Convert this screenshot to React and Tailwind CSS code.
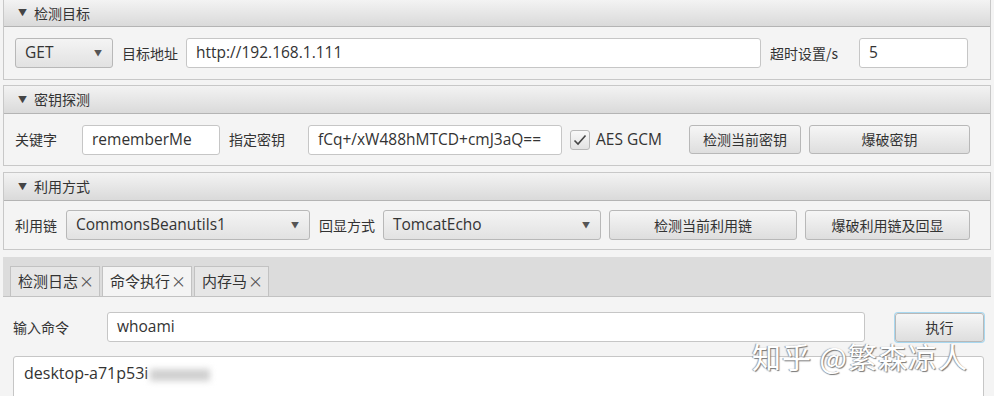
import React from "react";

const latin = "font-['Open_Sans','Noto_Sans_CJK_SC',sans-serif]";
const cjk = "font-['Noto_Sans_CJK_SC','Open_Sans',sans-serif]";

const Header = ({ title, h = "h-[28px]" }) => (
    <div className={`${h} flex items-center border-b border-[#b4b4b4] bg-gradient-to-b from-[#f3f3f3] to-[#dadada] pl-[14px] text-[14px] text-[#333] ${cjk}`}>
        <span className="mr-[7px] text-[9px] text-[#444]">▼</span>
        {title}
    </div>
);

const Label = ({ children, className = "" }) => (
    <span className={`text-[14px] text-[#333] ${cjk} ${className}`}>{children}</span>
);

const Input = ({ value, className = "" }) => (
    <div className={`flex items-center rounded-[3px] border border-[#c6c6c6] bg-white px-[9px] text-[15.5px] text-[#333] ${latin} ${className}`}>
        {value}
    </div>
);

const Combo = ({ value, className = "" }) => (
    <div className={`flex items-center justify-between rounded-[3px] border border-[#b8b8b8] bg-gradient-to-b from-[#f4f4f4] to-[#e2e2e2] pl-[9px] pr-[10px] text-[15.5px] text-[#333] ${latin} ${className}`}>
        <span>{value}</span>
        <span className="text-[8px] text-[#555]">▼</span>
    </div>
);

const Btn = ({ children, className = "" }) => (
    <div className={`flex items-center justify-center rounded-[3px] border border-[#b8b8b8] bg-gradient-to-b from-[#f6f6f6] to-[#dedede] text-[14px] text-[#333] ${cjk} ${className}`}>
        {children}
    </div>
);

const Tab = ({ label, active, w }) => (
    <div className={`flex h-[30px] items-center border border-b-0 border-[#c2c2c2] pl-[7px] text-[15px] text-[#333] ${cjk} ${w} ${active ? "bg-[#f4f4f4]" : "bg-[#e6e6e6]"}`}>
        {label}
        <span className="ml-[1px] text-[15px] text-[#555]">×</span>
    </div>
);

export default function App() {
    return (
        <div className="relative h-[396px] w-[994px] overflow-hidden bg-[#f4f4f4]">
            <div className="flex flex-col px-[3px]">
                {/* 检测目标 */}
                <div className="border-x border-[#c8c8c8]">
                    <Header title="检测目标" h="h-[27px]" />
                    <div className="flex h-[53px] items-center border-b border-[#c8c8c8] pl-[11px]">
                        <Combo value="GET" className="h-[30px] w-[98px]" />
                        <Label className="ml-[9px]">目标地址</Label>
                        <Input value="http://192.168.1.111" className="ml-[8px] h-[30px] w-[575px]" />
                        <Label className="ml-[9px]">超时设置/s</Label>
                        <Input value="5" className="ml-auto mr-[22px] h-[30px] w-[109px]" />
                    </div>
                </div>

                {/* 密钥探测 */}
                <div className="mt-[5px] border-x border-t border-[#c8c8c8]">
                    <Header title="密钥探测" />
                    <div className="flex h-[52px] items-center border-b border-[#c8c8c8] pl-[11px]">
                        <Label>关键字</Label>
                        <Input value="rememberMe" className="ml-[25px] h-[30px] w-[138px]" />
                        <Label className="ml-[9px]">指定密钥</Label>
                        <Input value="fCq+/xW488hMTCD+cmJ3aQ==" className="ml-[23px] h-[30px] w-[254px] whitespace-nowrap" />
                        <div className="ml-[8px] flex h-[20px] w-[20px] items-center justify-center rounded-[3px] border border-[#b8b8b8] bg-gradient-to-b from-[#f8f8f8] to-[#e2e2e2]">
                            <svg width="14" height="12" viewBox="0 0 14 12">
                                <path d="M1.5 6.5 L5 10 L12.5 1.5" fill="none" stroke="#444" strokeWidth="1.6" />
                            </svg>
                        </div>
                        <span className={`ml-[6px] text-[15.5px] text-[#333] ${latin}`}>AES GCM</span>
                        <Btn className="ml-[27px] h-[29px] w-[112px]">检测当前密钥</Btn>
                        <Btn className="ml-[8px] h-[29px] w-[161px]">爆破密钥</Btn>
                    </div>
                </div>

                {/* 利用方式 */}
                <div className="mt-[6px] border-x border-t border-[#c8c8c8]">
                    <Header title="利用方式" />
                    <div className="flex h-[49px] items-center border-b border-[#c8c8c8] pl-[11px]">
                        <Label>利用链</Label>
                        <Combo value="CommonsBeanutils1" className="ml-[9px] h-[30px] w-[244px]" />
                        <Label className="ml-[9px]">回显方式</Label>
                        <Combo value="TomcatEcho" className="ml-[8px] h-[30px] w-[218px]" />
                        <Btn className="ml-[8px] h-[30px] w-[188px]">检测当前利用链</Btn>
                        <Btn className="ml-[8px] h-[30px] w-[165px]">爆破利用链及回显</Btn>
                    </div>
                </div>

                {/* tabs */}
                <div className="mt-[7px] flex h-[40px] items-end gap-[2px] border-b border-[#c2c2c2] bg-[#dcdcdc] pl-[7px]">
                    <Tab label="检测日志" w="w-[90px]" />
                    <Tab label="命令执行" w="w-[90px]" active />
                    <Tab label="内存马" w="w-[75px]" />
                </div>

                <div className="flex items-center pl-[10px] pt-[15px]">
                    <Label>输入命令</Label>
                    <Input value="whoami" className="ml-[38px] h-[30px] w-[758px]" />
                    <Btn className="ml-[30px] h-[29px] w-[89px] border-[#3aa3d8] shadow-[0_0_0_1px_#a8d8f0]">执行</Btn>
                </div>

                <div className={`ml-[10px] mt-[14px] h-[60px] w-[971px] rounded-t-[3px] border border-[#c6c6c6] bg-white px-[10px] pt-[4px] text-[16px] text-[#333] ${latin}`}>
                    desktop-a71p53i
                    <span className="ml-[2px] inline-block h-[12px] w-[60px] bg-[#d0d0d0] align-middle blur-[3px]" />
                </div>
            </div>

            {/* watermark */}
            <div
                className={`absolute left-[752px] top-[341px] text-[29px] leading-[30px] tracking-[1px] text-white ${cjk}`}
                style={{ textShadow: "1px 1px 1px #777, -1px 0 1px #999" }}
            >
                知乎 @繁森凉人
            </div>
        </div>
    );
}
